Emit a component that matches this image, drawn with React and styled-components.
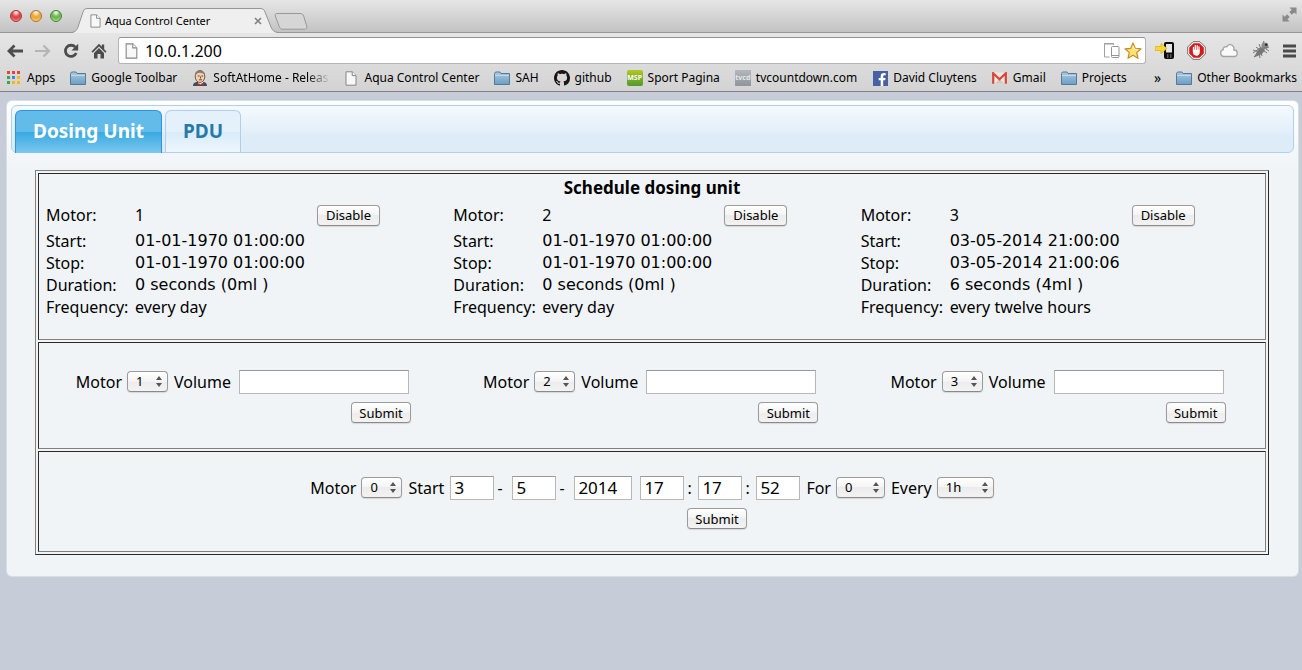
import React from 'react';
import styled, { createGlobalStyle, css } from 'styled-components';

const GlobalStyle = createGlobalStyle`
  * { box-sizing: border-box; }
  body {
    margin: 0;
    min-height: 100vh;
    background: #c6cdd9;
    color: #000;
    font: 16px/22px "Noto Sans", "Open Sans", sans-serif;
  }
  button, input, select { font-family: inherit; color: inherit; }
`;

/* ---------- browser window ---------- */

const Chrome = styled.header`
  border-bottom: 1px solid #7f8083;
  background: linear-gradient(#f0f0f0, #d3d3d3);
`;

const TitleBar = styled.div`
  display: flex;
  align-items: flex-end;
  height: 33px;
  padding: 0 5px 0 10px;
  background: linear-gradient(#e6e6e6, #c2c2c2);
  box-shadow: inset 0 -1px 0 #989898;
`;

const Lights = styled.div`
  display: flex;
  gap: 8px;
  align-self: flex-start;
  padding-top: 10px;
`;

const Light = styled.button`
  width: 12px;
  height: 12px;
  padding: 0;
  border: 1px solid ${p => p.$edge};
  border-radius: 50%;
  background: radial-gradient(circle at 50% 15%, #fff 0, ${p => p.$fill} 40%, ${p => p.$fill} 60%, ${p => p.$glow} 100%);
`;

const BrowserTab = styled.div`
  position: relative;
  display: flex;
  align-items: center;
  width: 206px;
  height: 25px;
  margin-left: 10px;
  padding: 0 16px 0 18px;
  font-size: 11px;
  line-height: 16px;
`;

const TabShape = styled.svg`
  position: absolute;
  inset: 0;
`;

const TabTitle = styled.span`
  position: relative;
  flex: 1;
  padding-left: 4px;
  white-space: nowrap;
`;

const TabIcon = styled.span`
  position: relative;
  display: flex;
`;

const PlainButton = styled.button`
  position: relative;
  display: flex;
  padding: 0;
  border: 0;
  background: none;
`;

const NewTab = styled(PlainButton)`
  margin: 0 auto 3px -4px;
`;

const Expand = styled(PlainButton)`
  align-self: flex-start;
  margin-top: 7px;
`;

const Toolbar = styled.div`
  display: flex;
  align-items: center;
  height: 35px;
  padding: 0 6px 0 7px;
`;

const IconGroup = styled.div`
  display: flex;
  align-items: center;
  gap: ${p => p.$gap}px;
`;

const Omnibox = styled.div`
  display: flex;
  align-items: center;
  flex: 1;
  height: 27px;
  margin: 0 9px 0 11px;
  padding: 0 3px 0 6px;
  border: 1px solid #b4b4b4;
  border-top-color: #949494;
  border-radius: 3px;
  background: #fff;
`;

const Address = styled.input`
  flex: 1;
  min-width: 0;
  margin-left: 7px;
  padding: 0;
  border: 0;
  outline: 0;
  background: none;
  font-size: 16px;
  line-height: 22px;
`;

const BookmarkBar = styled.nav`
  display: flex;
  align-items: center;
  gap: 15px;
  height: 23px;
  padding: 0 5px 3px 6px;
  font-size: 12px;
  line-height: 16px;
  white-space: nowrap;
`;

const Bookmark = styled.a`
  display: flex;
  align-items: center;
  gap: 5px;
  color: #000;
  text-decoration: none;
`;

const BookmarkIcon = styled.span`
  display: flex;
  justify-content: center;
  min-width: 16px;
`;

const FadedText = styled.span`
  background: linear-gradient(to right, #000 82%, #c4c4c4);
  background-clip: text;
  color: transparent;
`;

const More = styled(PlainButton)`
  margin-left: auto;
  font-size: 14px;
  line-height: 16px;
`;

/* ---------- page ---------- */

const Page = styled.main`
  padding: 8px 3px 0 6px;
`;

const Panel = styled.div`
  padding: 4px 4px 21px;
  border: 1px solid #dadee3;
  border-radius: 6px;
  background: linear-gradient(#fff, #f0f4f7 70px);
`;

const TabList = styled.nav`
  display: flex;
  align-items: flex-start;
  gap: 3px;
  height: 48px;
  padding: 4px 3px 0;
  border: 1px solid #aed0ea;
  border-radius: 6px;
  background: linear-gradient(#f5fafe, #deecf8 70%, #deecf8);
`;

const PageTab = styled.a`
  height: 42px;
  padding: 0 17px;
  border: 1px solid #aed0ea;
  border-bottom: 0;
  border-radius: 6px 6px 0 0;
  background: linear-gradient(#e4f1fb 50%, #d7ebf9 50%, #eef6fd);
  color: #2779aa;
  font-size: 19px;
  font-weight: 700;
  line-height: 40px;
  text-decoration: none;
  ${p => p.$active && css`
    height: 43px;
    border-color: #2694e8;
    background: linear-gradient(#62bbe8 50%, #38a9e1 50%, #7cc7ee);
    color: #fff;
  `}
`;

const Frame = styled.div`
  display: flex;
  flex-direction: column;
  gap: 2px;
  margin: 17px 25px 0 24px;
  padding: 2px;
  border: 1px solid;
  border-color: #808080 #2a2a2a #2a2a2a #808080;
`;

const Cell = styled.section`
  padding: ${p => p.$pad};
  border: 1px solid;
  border-color: #2a2a2a #808080 #808080 #2a2a2a;
`;

const Title = styled.h1`
  margin: 0 0 3px;
  font-size: 17px;
  line-height: 22px;
  text-align: center;
`;

const Columns = styled.div`
  display: grid;
  grid-template-columns: repeat(3, 1fr);
`;

const Motor = styled.table`
  margin-left: 5px;
  border-collapse: collapse;
  white-space: nowrap;
  th, td { height: 22px; padding: 0; font-weight: 400; text-align: left; }
  th { width: 89px; }
  tr:first-child > * { height: 28px; padding-bottom: 2px; }
`;

const Value = styled.td`
  width: 182px;
  font-family: ${p => (p.$numeric ? '"DejaVu Sans", sans-serif' : 'inherit')};
`;

const Aqua = css`
  height: 21px;
  border: 1px solid #9b9b9b;
  border-bottom-color: #8a8a8a;
  border-radius: 4px;
  background: linear-gradient(#fff, #f4f4f4 50%, #ececec 50%, #f3f3f3);
  box-shadow: 0 1px 1px #d5d8db;
  font-size: 13px;
  line-height: 18px;
`;

const Button = styled.button`
  ${Aqua}
  display: block;
  width: ${p => p.$width}px;
  padding: 0;
  text-align: center;
`;

const DoseForm = styled.form`
  display: flex;
  flex-direction: column;
  align-items: flex-end;
  gap: 8px;
  width: 335px;
  margin-left: 35px;
`;

const ScheduleForm = styled.form`
  display: flex;
  flex-direction: column;
  align-items: center;
  gap: 8px;
`;

const SubmitShift = styled.div`
  padding-left: 130px;
`;

const Fields = styled.div`
  display: flex;
  align-items: center;
  gap: 6px;
  padding-right: ${p => p.$inset || 0}px;
`;

const Label = styled.label`
  display: flex;
  align-items: center;
  gap: ${p => p.$gap || 5}px;
`;

const TextBox = styled.input`
  width: ${p => p.$width}px;
  height: 24px;
  padding: 0 3px 2px;
  border: 1px solid #b8b8b8;
  border-top-color: #989898;
  border-radius: 0;
  background: #fff;
  font-size: 17px;
  line-height: 20px;
`;

const Parts = styled.span`
  display: flex;
  align-items: center;
  margin-right: ${p => p.$after || 0}px;
`;

const Separator = styled.span`
  width: ${p => p.$width}px;
  padding-left: 3px;
`;

const SelectWrap = styled.span`
  position: relative;
  display: inline-flex;
  width: ${p => p.$width}px;
  margin-bottom: 2px;
`;

const SelectBox = styled.select`
  ${Aqua}
  appearance: none;
  width: 100%;
  padding: 0 0 0 8px;
`;

const Arrows = styled.svg`
  position: absolute;
  top: 5px;
  right: 6px;
  pointer-events: none;
`;

/* ---------- icons ---------- */

const PageIcon = ({ w = 12, h = 15 }) => (
  <svg width={w} height={h} viewBox="0 0 12 15">
    <path d="M1 .8h6.2L11 4.6v9.6H1z" fill="#f8f8f8" stroke="#868686" />
    <path d="M7.2.8v3.8H11" fill="#fff" stroke="#868686" />
  </svg>
);

const FolderIcon = () => (
  <svg width="16" height="15" viewBox="0 0 16 15">
    <defs>
      <linearGradient id="folder" x1="0" y1="0" x2="0" y2="1">
        <stop offset="0" stopColor="#a9cbe2" />
        <stop offset="1" stopColor="#6c9dc2" />
      </linearGradient>
    </defs>
    <path d="M.5 13.500V2.500L1.500 1H6l1 1.500h8.500v11z" fill="url(#folder)" stroke="#54799a" />
    <path d="M1 4.500h14" stroke="#c2dbeb" />
  </svg>
);

const AppsIcon = () => {
  const colors = ['#ea4335', '#ea4335', '#ea4335', '#34a853', '#3b86f0', '#fbb60a', '#34a853', '#fbb60a', '#fbb60a'];
  return (
    <svg width="14" height="14" viewBox="0 0 14 14">
      {colors.map((c, i) => <rect key={i} x={(i % 3) * 5} y={Math.floor(i / 3) * 5} width="3" height="3" fill={c} />)}
    </svg>
  );
};

const ButlerIcon = () => (
  <svg width="16" height="16" viewBox="0 0 16 16">
    <path d="M1 16c0-3 2-4 4-4h6c3 0 4 2 4 4z" fill="#3f4a5c" />
    <path d="M6 11h5v4H6z" fill="#fff" />
    <path d="M5.500 13l3 1 3-1.400v3l-3-.8-3 1z" fill="#d02a2a" />
    <ellipse cx="8" cy="6.500" rx="4.800" ry="6" fill="#efcfae" stroke="#4b3a30" strokeWidth=".8" />
    <path d="M3 6C2.500 2 5 .3 8 .4c3 0 5 1.600 4.800 4.600C11 2.500 7 2 5 3.500z" fill="#8b7b6e" />
    <path d="M5.800 6h1.800M9.400 6h1.800M7 9.800h3M8.500 6.500v2" stroke="#5a3c2c" strokeWidth=".9" />
  </svg>
);

const GithubIcon = () => (
  <svg width="16" height="16" viewBox="0 0 16 16">
    <path fill="#171515" d="M8 0C3.580 0 0 3.580 0 8c0 3.540 2.290 6.530 5.470 7.590.4.070.55-.17.55-.38 0-.19-.01-.82-.01-1.490-2.010.37-2.530-.49-2.690-.94-.09-.23-.48-.94-.82-1.130-.28-.15-.68-.52-.01-.53.63-.01 1.080.58 1.230.82.72 1.210 1.870.87 2.330.66.07-.52.28-.87.51-1.070-1.780-.2-3.640-.89-3.640-3.950 0-.87.31-1.590.82-2.150-.08-.2-.36-1.020.08-2.120 0 0 .67-.21 2.200.82.64-.18 1.320-.27 2-.27s1.360.09 2 .27c1.530-1.040 2.200-.82 2.200-.82.44 1.100.16 1.920.08 2.120.51.56.82 1.270.82 2.150 0 3.070-1.870 3.750-3.650 3.950.29.25.54.73.54 1.480 0 1.070-.01 1.930-.01 2.200 0 .21.15.46.55.38A8.010 8.010 0 0 0 16 8c0-4.420-3.580-8-8-8z" />
  </svg>
);

const Badge = styled.span`
  display: block;
  width: 16px;
  height: 16px;
  border-radius: ${p => p.$radius}px;
  background: ${p => p.$fill};
  color: ${p => p.$ink};
  font: 700 ${p => p.$size}px/16px "Noto Sans", sans-serif;
  text-align: center;
`;

const FacebookIcon = () => (
  <svg width="15" height="15" viewBox="0 0 15 15">
    <rect width="15" height="15" fill="#4761a3" />
    <path d="M10.200 15V9.200h2l.4-2.300h-2.400V5.500c0-.8.3-1.200 1.200-1.200h1.200V2.100C12.300 2 11.700 2 11 2 8.900 2 7.700 3.200 7.700 5.200v1.700H5.700v2.300h2V15z" fill="#fff" />
  </svg>
);

const GmailIcon = () => (
  <svg width="15" height="12" viewBox="0 0 15 12">
    <path d="M1 .5h13v11H1z" fill="#ece9e2" />
    <path d="M3 11.500l4.500-5 4.500 5z" fill="#cfcac0" />
    <path d="M1.200 11.800V1.300l6.300 6 6.300-6v10.500" fill="none" stroke="#dc4437" strokeWidth="2.200" />
  </svg>
);

const BackIcon = ({ flip, color }) => (
  <svg width="16" height="16" viewBox="0 0 16 16">
    <path d={flip ? 'M0 8h13M8.500 2.500L14 8l-5.500 5.500' : 'M16 8H3M7.500 2.500L2 8l5.500 5.500'} fill="none" stroke={color} strokeWidth={flip ? 2.2 : 2.8} />
  </svg>
);

const ReloadIcon = () => (
  <svg width="16" height="16" viewBox="0 0 16 16">
    <path d="M12.300 4.200A5.600 5.600 0 1 0 13.200 10" fill="none" stroke="#4c4c4c" strokeWidth="2.800" />
    <path d="M15.200.8v6.700H8.500z" fill="#4c4c4c" />
  </svg>
);

const HomeIcon = () => (
  <svg width="16" height="16" viewBox="0 0 16 16">
    <path d="M8 .8l2.800 2.900V1.500h2.400v4.700L15.500 8.600l-1.200 1.200L8 3.500 1.700 9.800.5 8.600z" fill="#4c4c4c" />
    <path d="M8 5l5 5v5.500H9.500V11h-3v4.500H3V10z" fill="#4c4c4c" />
  </svg>
);

const DevicesIcon = () => (
  <svg width="17" height="17" viewBox="0 0 17 17">
    <path d="M10.500 3V1.500h-9v13.500h5" fill="none" stroke="#a0a0a0" />
    <path d="M1 2h10" stroke="#a0a0a0" />
    <rect x="8.500" y="4.500" width="7.500" height="11" rx="1" fill="#fff" stroke="#959595" />
    <path d="M8.500 13.500h7.500" stroke="#959595" />
  </svg>
);

const StarIcon = () => (
  <svg width="18" height="18" viewBox="0 0 18 18">
    <path d="M9 1l2.300 5.300 5.700.5-4.300 3.800 1.300 5.700-5-3-5 3 1.300-5.700L1 6.800l5.700-.5z" fill="#fde275" stroke="#c58c1f" strokeWidth="1.200" strokeLinejoin="round" />
    <path d="M9 3.500l1.500 3.700 3.500.3" fill="none" stroke="#fff7cf" />
  </svg>
);

const PhoneIcon = () => (
  <svg width="19" height="19" viewBox="0 0 19 19">
    <rect x="9" y="1" width="10" height="17" rx="2" fill="#0b0b0b" />
    <rect x="11" y="3" width="6" height="8.500" fill="#e6e6e6" />
    <path d="M12 14h1.500M15 14h1.500M12 16h1.500M15 16h1.500" stroke="#aaa" />
    <path d="M0 5.500h6V2.500l6 5-6 5V9.500H0z" fill="#fbd82f" stroke="#d9ac18" strokeWidth=".7" />
  </svg>
);

const StopIcon = () => (
  <svg width="19" height="19" viewBox="0 0 19 19">
    <path d="M6 .7h7L18.300 6v7L13 18.300H6L.7 13V6z" fill="#fff" stroke="#6c6c6c" />
    <path d="M6.600 2.200h5.800l4.400 4.400v5.800l-4.400 4.400H6.600l-4.400-4.400V6.600z" fill="#d8191b" />
    <path d="M6.500 10.500v-4M8.300 9V4.600M10.200 9V4.600M12 10V5.800" stroke="#fff" strokeWidth="1.300" strokeLinecap="round" />
    <path d="M5.900 8.800h6.800v2.700c0 2-1 3.200-3.200 3.200-2.400 0-3.600-1.400-3.600-3.600z" fill="#fff" />
  </svg>
);

const CloudIcon = () => (
  <svg width="19" height="19" viewBox="0 0 19 19">
    <path d="M4.500 15.500a3.500 3.500 0 0 1-.3-6.800C4 6.500 6 5 7.800 5.800 9 3.300 12.500 3 14 5c1 1 1.200 2.600.9 4 2 0 3.300 1.300 3.300 3.200 0 2-1.400 3.300-3.300 3.300z" fill="#fafafa" stroke="#a3a3a3" strokeWidth="1.300" />
  </svg>
);

const BugIcon = () => (
  <svg width="19" height="19" viewBox="0 0 19 19">
    <path d="M3 16L9 9M5 6l4 3 2 6M2 9l6 2 1 6M8 3l2 5 6 4M9 7L2 12" fill="none" stroke="#777" />
    <path d="M3 16.500l3.500-7L11 6l3 3-3 4z" fill="#777" />
    <circle cx="13.800" cy="4.800" r="3.400" fill="#8b8b8b" />
    <circle cx="15.200" cy="3.700" r="1.300" fill="#2c2c2c" />
    <path d="M12 7l6-1M15 8l3 2M12 2l1-2" stroke="#777" />
  </svg>
);

const MenuIcon = () => (
  <svg width="13" height="14" viewBox="0 0 13 14">
    <path d="M0 2h13M0 7h13M0 12h13" stroke="#4a4a4a" strokeWidth="3" />
  </svg>
);

const ExpandIcon = () => (
  <svg width="15" height="15" viewBox="0 0 15 15">
    <path d="M7.500.5h7V7.500L12.300 5.400 9.900 7.700 7.300 5.100l2.400-2.400z" fill="#8a8a8a" />
    <path d="M.5 7.500v7h7L5.400 12.300l2.300-2.400-2.600-2.600-2.400 2.400z" fill="#8a8a8a" />
  </svg>
);

/* ---------- parts ---------- */

const bookmarks = [
  { icon: <AppsIcon />, text: 'Apps' },
  { icon: <FolderIcon />, text: 'Google Toolbar' },
  { icon: <ButlerIcon />, text: 'SoftAtHome - Releas', faded: true },
  { icon: <PageIcon />, text: 'Aqua Control Center' },
  { icon: <FolderIcon />, text: 'SAH' },
  { icon: <GithubIcon />, text: 'github' },
  { icon: <Badge $fill="linear-gradient(#b4c820, #4f9a2c)" $ink="#fff" $size={7} $radius={2}>MSP</Badge>, text: 'Sport Pagina' },
  { icon: <Badge $fill="linear-gradient(#b3b7bd, #8f959c)" $ink="#e4e6e9" $size={7} $radius={0}>tvcd</Badge>, text: 'tvcountdown.com' },
  { icon: <FacebookIcon />, text: 'David Cluytens' },
  { icon: <GmailIcon />, text: 'Gmail' },
  { icon: <FolderIcon />, text: 'Projects' },
];

const motors = [
  { id: '1', start: '01-01-1970 01:00:00', stop: '01-01-1970 01:00:00', duration: '0 seconds (0ml )', frequency: 'every day' },
  { id: '2', start: '01-01-1970 01:00:00', stop: '01-01-1970 01:00:00', duration: '0 seconds (0ml )', frequency: 'every day' },
  { id: '3', start: '03-05-2014 21:00:00', stop: '03-05-2014 21:00:06', duration: '6 seconds (4ml )', frequency: 'every twelve hours' },
];

function Select({ width, value }) {
  return (
    <SelectWrap $width={width}>
      <SelectBox defaultValue={value}><option>{value}</option></SelectBox>
      <Arrows width="6" height="11" viewBox="0 0 6 11">
        <path d="M3 0l3 4H0zM3 11L0 7h6z" fill="#555" />
      </Arrows>
    </SelectWrap>
  );
}

function BrowserChrome() {
  return (
    <Chrome>
      <TitleBar>
        <Lights>
          <Light aria-label="Close" $edge="#a03a38" $fill="#e2474a" $glow="#ffb0ae" />
          <Light aria-label="Minimize" $edge="#a8742c" $fill="#f0a83c" $glow="#ffe79c" />
          <Light aria-label="Zoom" $edge="#4b7f3a" $fill="#6fba55" $glow="#cdf3ac" />
        </Lights>
        <BrowserTab>
          <TabShape width="206" height="25" viewBox="0 0 206 25">
            <path d="M0 25c4-1 5-3 6-6L11 4c1-3 2-3.500 5-3.500h172c3 0 4 1 5 3.500l6 15c1 3 3 5 7 6z" fill="#efefef" />
            <path d="M0 24.500c4-1 5-3 6-5.500L11 4c1-3 2-3.500 5-3.500h172c3 0 4 1 5 3.500l6 15c1 3 3 5 7 5.500" fill="none" stroke="#959595" />
          </TabShape>
          <TabIcon><PageIcon w={11} h={14} /></TabIcon>
          <TabTitle>Aqua Control Center</TabTitle>
          <PlainButton aria-label="Close tab">
            <svg width="8" height="8" viewBox="0 0 8 8"><path d="M1 1l6 6M7 1L1 7" stroke="#808080" strokeWidth="1.600" /></svg>
          </PlainButton>
        </BrowserTab>
        <NewTab aria-label="New tab">
          <svg width="34" height="17" viewBox="0 0 34 17">
            <path d="M3 .5h23c2 0 3 .8 3.700 2.500l3 10c.6 2-.2 3.200-2 3.200H9c-2 0-3-.8-3.700-2.500L1.300 3C.8 1.500 1.500.5 3 .5z" fill="#d6d6d6" stroke="#989898" />
          </svg>
        </NewTab>
        <Expand aria-label="Full screen"><ExpandIcon /></Expand>
      </TitleBar>
      <Toolbar>
        <IconGroup $gap={12}>
          <PlainButton aria-label="Back"><BackIcon color="#4c4c4c" /></PlainButton>
          <PlainButton aria-label="Forward"><BackIcon flip color="#b5b5b5" /></PlainButton>
          <PlainButton aria-label="Reload"><ReloadIcon /></PlainButton>
          <PlainButton aria-label="Home"><HomeIcon /></PlainButton>
        </IconGroup>
        <Omnibox>
          <PageIcon w={13} h={16} />
          <Address aria-label="Address" defaultValue="10.0.1.200" />
          <IconGroup $gap={4}>
            <PlainButton aria-label="Devices"><DevicesIcon /></PlainButton>
            <PlainButton aria-label="Bookmark this page"><StarIcon /></PlainButton>
          </IconGroup>
        </Omnibox>
        <IconGroup $gap={13}>
          <PlainButton aria-label="Send to phone"><PhoneIcon /></PlainButton>
          <PlainButton aria-label="Ad blocker"><StopIcon /></PlainButton>
          <PlainButton aria-label="Cloud"><CloudIcon /></PlainButton>
          <PlainButton aria-label="Debugger"><BugIcon /></PlainButton>
          <PlainButton aria-label="Menu"><MenuIcon /></PlainButton>
        </IconGroup>
      </Toolbar>
      <BookmarkBar>
        {bookmarks.map(b => (
          <Bookmark key={b.text} href="#">
            <BookmarkIcon>{b.icon}</BookmarkIcon>
            {b.faded ? <FadedText>{b.text}</FadedText> : b.text}
          </Bookmark>
        ))}
        <More>»</More>
        <Bookmark href="#"><FolderIcon />Other Bookmarks</Bookmark>
      </BookmarkBar>
    </Chrome>
  );
}

function MotorStatus({ motor }) {
  return (
    <Motor>
      <tbody>
        <tr>
          <th scope="row">Motor:</th>
          <Value>{motor.id}</Value>
          <td><Button $width={63}>Disable</Button></td>
        </tr>
        <tr><th scope="row">Start:</th><Value $numeric>{motor.start}</Value></tr>
        <tr><th scope="row">Stop:</th><Value $numeric>{motor.stop}</Value></tr>
        <tr><th scope="row">Duration:</th><Value $numeric>{motor.duration}</Value></tr>
        <tr><th scope="row">Frequency:</th><Value>{motor.frequency}</Value></tr>
      </tbody>
    </Motor>
  );
}

export default function App() {
  return (
    <>
      <GlobalStyle />
      <BrowserChrome />
      <Page>
        <Panel>
          <TabList>
            <PageTab href="#dosing" $active>Dosing Unit</PageTab>
            <PageTab href="#pdu">PDU</PageTab>
          </TabList>
          <Frame>
            <Cell $pad="3px 2px 21px">
              <Title>Schedule dosing unit</Title>
              <Columns>{motors.map(m => <MotorStatus key={m.id} motor={m} />)}</Columns>
            </Cell>
            <Cell $pad="27px 2px 25px">
              <Columns>
                {motors.map(m => (
                  <DoseForm key={m.id}>
                    <Fields $inset={2}>
                      <Label>Motor <Select width={41} value={m.id} /></Label>
                      <Label $gap={8}>Volume <TextBox $width={170} /></Label>
                    </Fields>
                    <Button type="button" $width={60}>Submit</Button>
                  </DoseForm>
                ))}
              </Columns>
            </Cell>
            <Cell $pad="24px 2px 22px">
              <ScheduleForm>
                <Fields>
                  <Label>Motor <Select width={41} value="0" /></Label>
                  <Label htmlFor="day">Start</Label>
                  <Parts $after={2}>
                    <TextBox id="day" $width={44} defaultValue="3" />
                    <Separator $width={18}>-</Separator>
                    <TextBox aria-label="Month" $width={44} defaultValue="5" />
                    <Separator $width={18}>-</Separator>
                    <TextBox aria-label="Year" $width={58} defaultValue="2014" />
                  </Parts>
                  <Parts>
                    <TextBox aria-label="Hour" $width={44} defaultValue="17" />
                    <Separator $width={14}>:</Separator>
                    <TextBox aria-label="Minute" $width={44} defaultValue="17" />
                    <Separator $width={14}>:</Separator>
                    <TextBox aria-label="Second" $width={44} defaultValue="52" />
                  </Parts>
                  <Label>For <Select width={49} value="0" /></Label>
                  <Label>Every <Select width={57} value="1h" /></Label>
                </Fields>
                <SubmitShift><Button type="button" $width={60}>Submit</Button></SubmitShift>
              </ScheduleForm>
            </Cell>
          </Frame>
        </Panel>
      </Page>
    </>
  );
}
